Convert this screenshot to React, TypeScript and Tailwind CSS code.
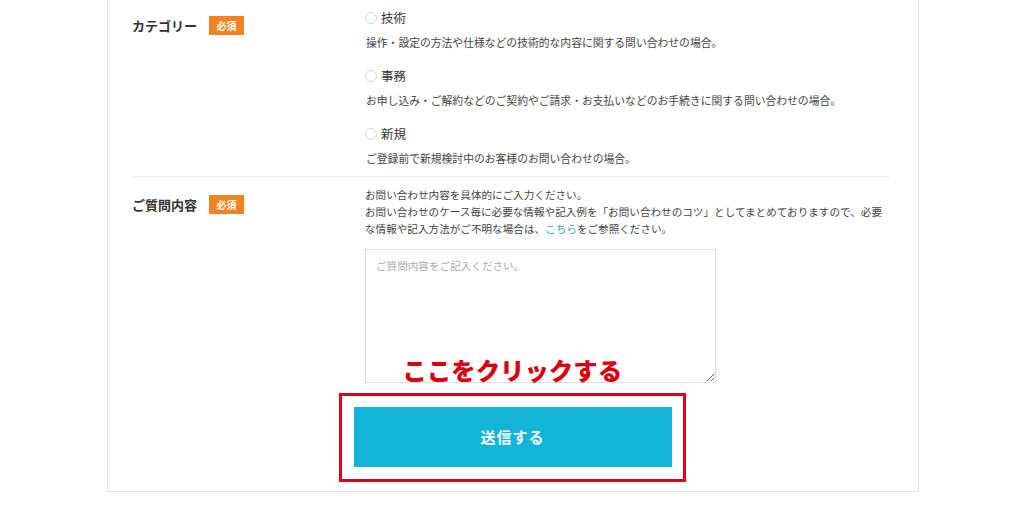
import React from "react";

const jp = { fontFamily: '"Noto Sans CJK JP", "Noto Sans", sans-serif' };

function Badge() {
  return (
    <span className="inline-flex items-center justify-center w-[35px] h-[19px] bg-[#f58220] text-white text-[10px] font-bold leading-none">
      必須
    </span>
  );
}

function Option({ label, desc }: { label: string; desc: string }) {
  return (
    <div className="mb-[15px] last:mb-0">
      <div className="flex items-center h-[20px]">
        <span className="w-[12px] h-[12px] rounded-full border border-[#d6d6d6] bg-white" />
        <span className="ml-[4px] text-[12.5px] text-[#333] leading-none">{label}</span>
      </div>
      <div className="mt-[6px] text-[10.8px] leading-[17px] text-[#444] pl-[1px] whitespace-nowrap">{desc}</div>
    </div>
  );
}

export default function App() {
  return (
    <div className="w-[1024px] h-[507px] bg-white overflow-hidden" style={jp}>
      <div className="ml-[107px] w-[812px] border-x border-b border-[#e3e3e3] pl-[24px] pr-[29px]">
        {/* Row 1 */}
        <div className="flex border-b border-[#ececec]">
          <div className="w-[233px] pt-[16px] flex items-start">
            <div className="flex items-center gap-[12px] h-[19px]">
              <span className="text-[13px] font-bold text-[#333]">カテゴリー</span>
              <Badge />
            </div>
          </div>
          <div className="flex-1 pt-[8px] pb-[9px]">
            <Option label="技術" desc="操作・設定の方法や仕様などの技術的な内容に関する問い合わせの場合。" />
            <Option label="事務" desc="お申し込み・ご解約などのご契約やご請求・お支払いなどのお手続きに関する問い合わせの場合。" />
            <Option label="新規" desc="ご登録前で新規検討中のお客様のお問い合わせの場合。" />
          </div>
        </div>
        {/* Row 2 */}
        <div className="flex">
          <div className="w-[233px] pt-[18px] flex items-start">
            <div className="flex items-center gap-[12px] h-[19px]">
              <span className="text-[13px] font-bold text-[#333]">ご質問内容</span>
              <Badge />
            </div>
          </div>
          <div className="flex-1 pt-[9px]">
            <div className="text-[10.6px] leading-[17px] text-[#444] whitespace-nowrap">
              お問い合わせ内容を具体的にご入力ください。
              <br />
              お問い合わせのケース毎に必要な情報や記入例を「お問い合わせのコツ」としてまとめておりますので、必要
              <br />
              な情報や記入方法がご不明な場合は、<span className="text-[#3aa3d8]">こちら</span>をご参照ください。
            </div>
            <textarea
              className="block mt-[12px] w-[351px] h-[134px] border border-[#dcdcdc] px-[10px] py-[8px] text-[10.6px] text-[#333] placeholder:text-[#aaa] outline-none"
              style={jp}
              placeholder="ご質問内容をご記入ください。"
            />
          </div>
        </div>
        {/* Submit */}
        <div className="flex justify-center pt-[24px] pb-[24px] pl-[4px]">
          <div className="relative">
            <span className="absolute left-[49px] top-[-52px] text-[24.4px] leading-[30px] font-black text-[#d90010] whitespace-nowrap z-10">
              ここをクリックする
            </span>
            <div className="absolute top-[-14px] left-[-15px] right-[-14px] bottom-[-15px] border-[3px] border-[#e0001a] pointer-events-none" />
            <button className="w-[318px] h-[60px] bg-[#12b5d7] text-white text-[15px] font-bold tracking-[1px]" style={jp}>
              送信する
            </button>
          </div>
        </div>
      </div>
    </div>
  );
}
